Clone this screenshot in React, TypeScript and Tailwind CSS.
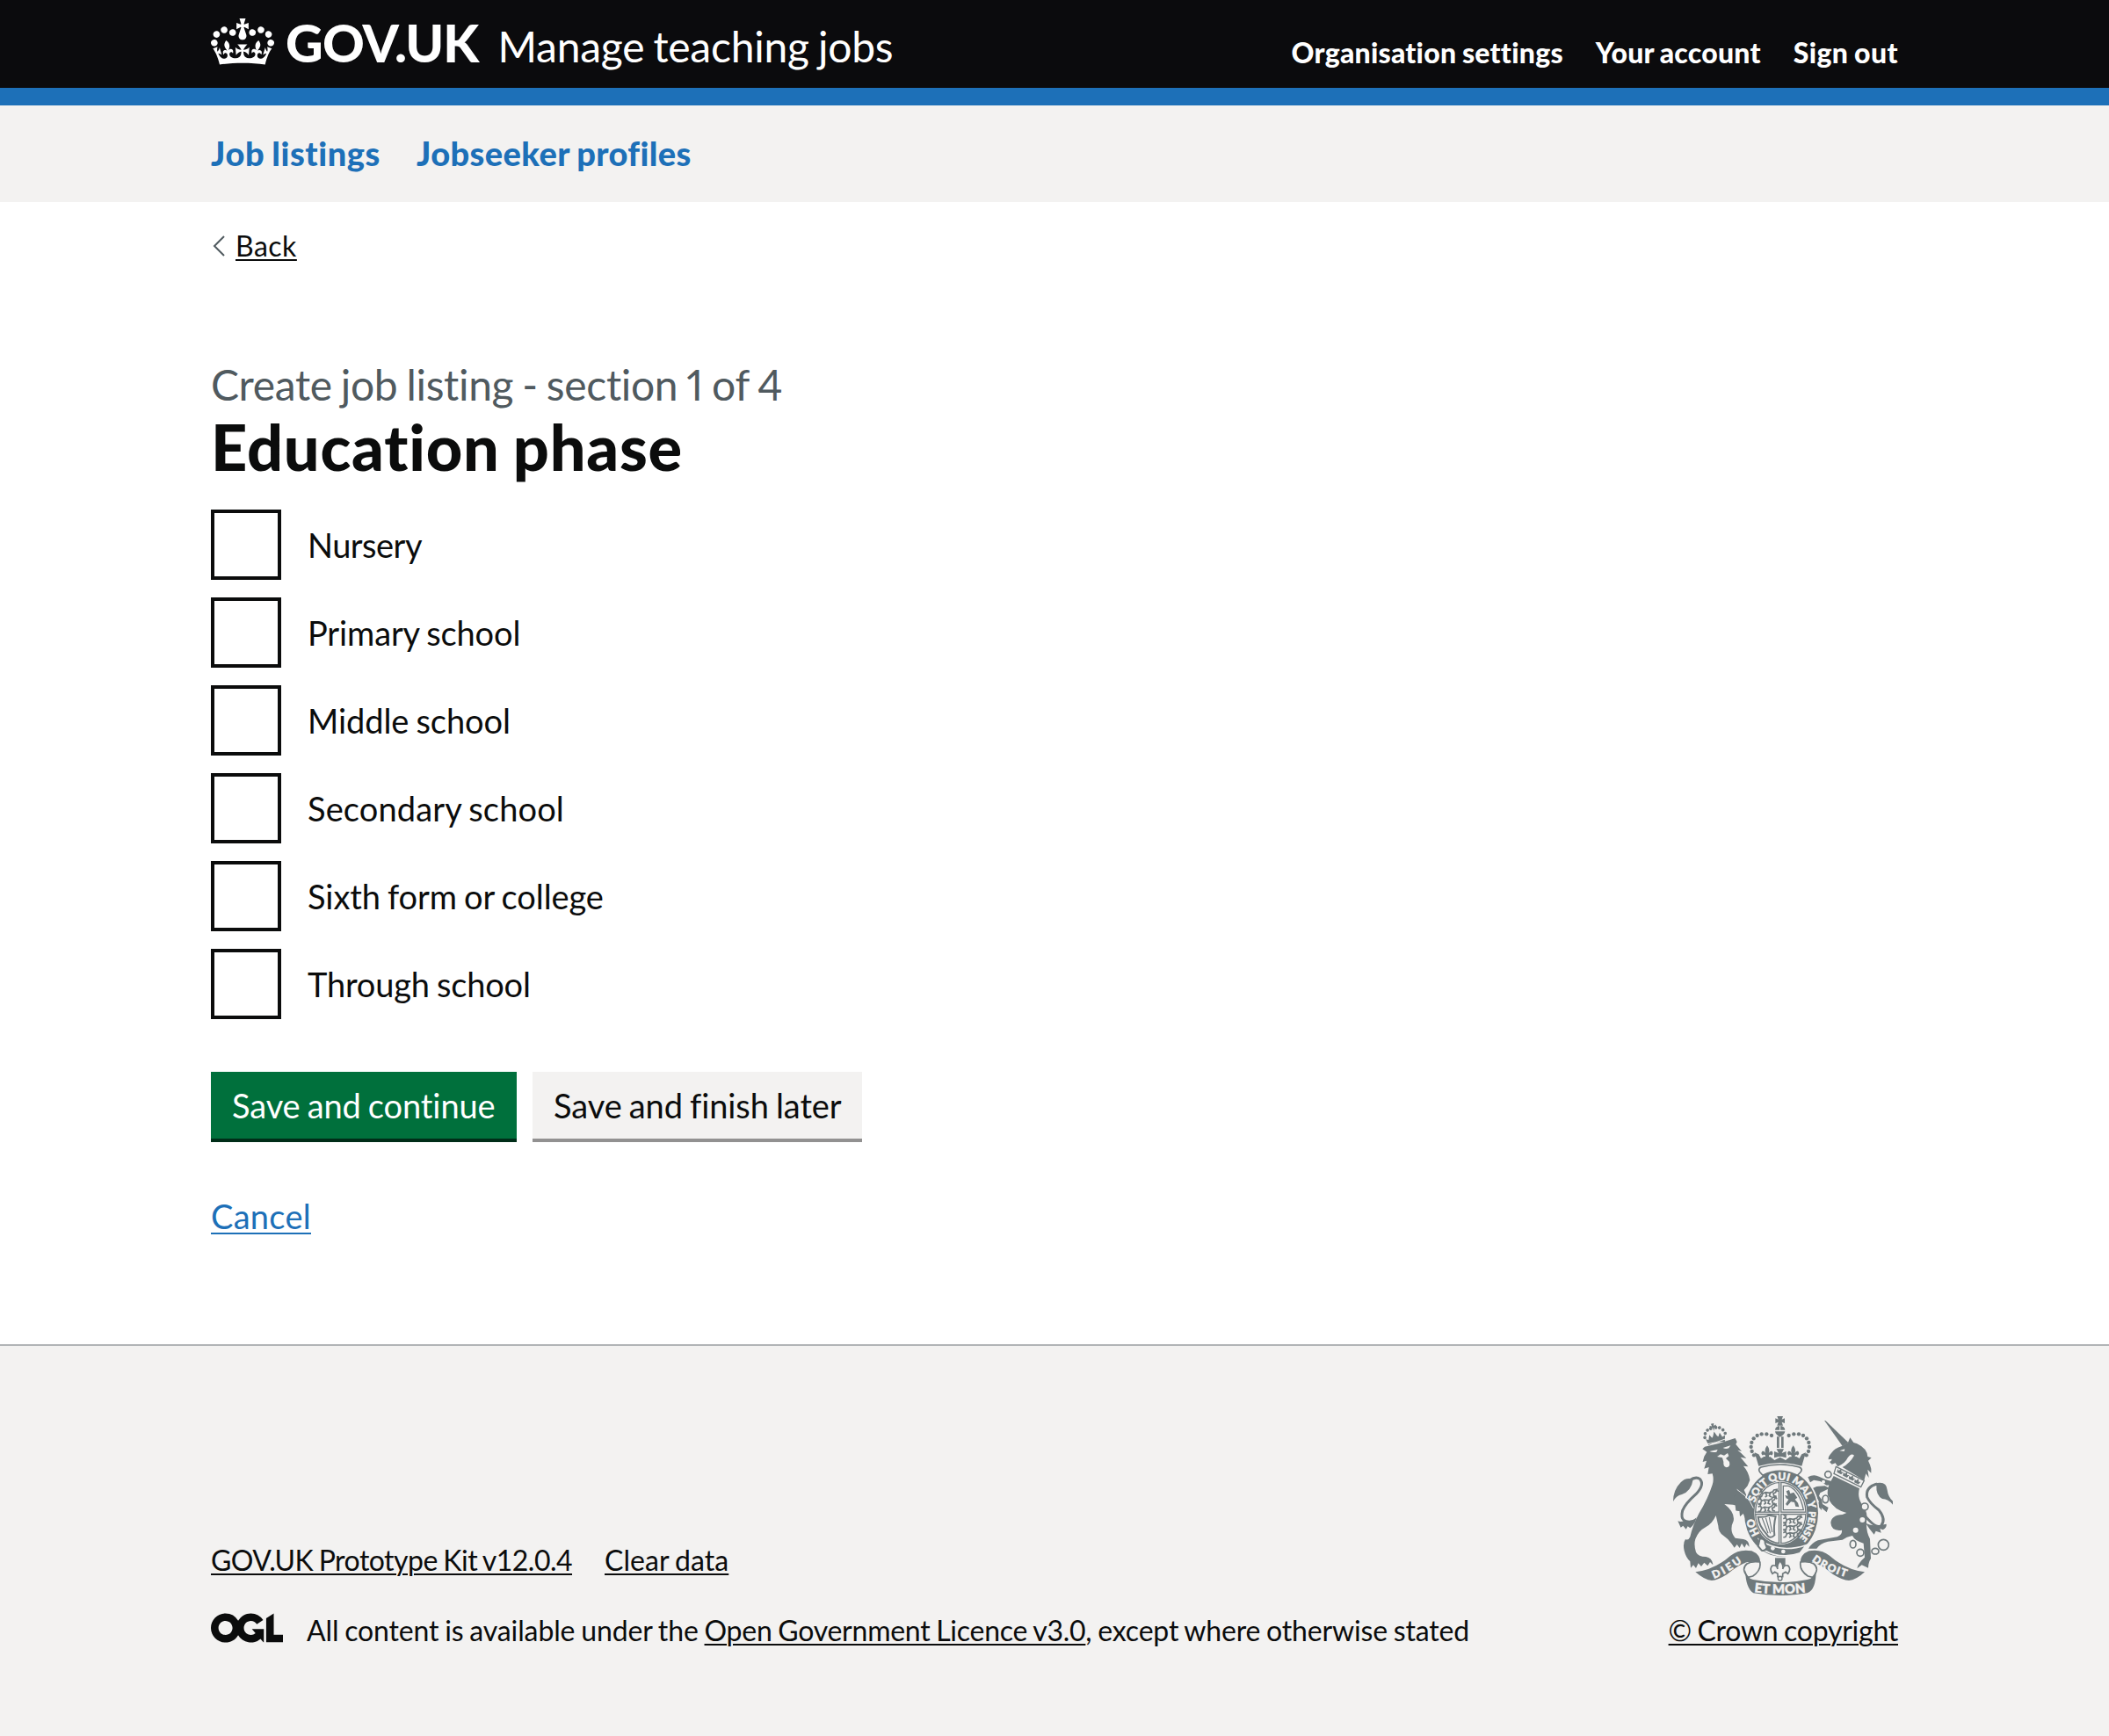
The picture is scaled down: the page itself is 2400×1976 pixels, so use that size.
const phases = [
  { label: "Nursery", text: "tracking-[-0.5px]" },
  { label: "Primary school", text: "tracking-[-0.13px]" },
  { label: "Middle school", text: "tracking-[-0.07px]" },
  { label: "Secondary school", text: "tracking-[0.13px]" },
  { label: "Sixth form or college", text: "tracking-[-0.09px]" },
  { label: "Through school", text: "tracking-[-0.17px]" },
];

function Crown() {
  return (
    <svg viewBox="0 0 132 97" className="h-[53px] w-[72px]" fill="currentColor" aria-hidden="true">
      <path
        fillRule="evenodd"
        d="M25 30.2c3.5 1.5 7.7-.2 9.1-3.7 1.5-3.6-.2-7.8-3.9-9.2-3.6-1.4-7.6.3-9.1 3.9-1.4 3.5.3 7.5 3.9 9zM9 39.5c3.6 1.5 7.8-.2 9.2-3.7 1.5-3.6-.2-7.8-3.9-9.1-3.6-1.5-7.6.2-9.1 3.8-1.4 3.5.3 7.5 3.8 9zM4.4 57.2c3.5 1.5 7.7-.2 9.1-3.8 1.5-3.6-.2-7.7-3.9-9.1-3.5-1.5-7.6.3-9.1 3.8-1.4 3.5.3 7.6 3.9 9.1zm38.3-21.4c3.5 1.5 7.7-.2 9.1-3.8 1.5-3.6-.2-7.7-3.9-9.1-3.6-1.5-7.6.3-9.1 3.8-1.3 3.6.4 7.7 3.9 9.1zm64.4-5.6c-3.6 1.5-7.8-.2-9.1-3.7-1.5-3.6.2-7.8 3.8-9.2 3.6-1.4 7.7.3 9.2 3.9 1.3 3.5-.4 7.5-3.9 9zm15.9 9.3c-3.6 1.5-7.7-.2-9.1-3.7-1.5-3.6.2-7.8 3.7-9.1 3.6-1.5 7.7.2 9.2 3.8 1.5 3.5-.3 7.5-3.8 9zm4.7 17.7c-3.6 1.5-7.8-.2-9.2-3.8-1.5-3.6.2-7.7 3.9-9.1 3.6-1.5 7.7.3 9.2 3.8 1.3 3.5-.4 7.6-3.9 9.1zM89.3 35.8c-3.6 1.5-7.8-.2-9.2-3.8-1.4-3.6.2-7.7 3.9-9.1 3.6-1.5 7.7.3 9.2 3.8 1.4 3.6-.3 7.7-3.9 9.1zM69.7 17.7l8.9 4.7V9.3l-8.9 2.8c-.2-.3-.5-.6-.9-.9L72.4 0H59.6l3.5 11.2c-.3.3-.6.5-.9.9l-8.8-2.8v13.1l8.8-4.7c.3.3.6.7.9.9l-5 15.4v.1c-.2.8-.4 1.6-.4 2.4 0 4.1 3.1 7.5 7 8.1h.2c.3 0 .7.1 1 .1.4 0 .7 0 1-.1h.2c4-.6 7.1-4.1 7.1-8.1 0-.8-.1-1.7-.4-2.4V34l-5.1-15.4c.4-.2.7-.6 1-.9zM66 92.8c16.9 0 32.8 1.1 47.1 3.2 4-16.9 8.9-26.7 14-33.5l-9.6-3.4c1 4.9 1.1 7.2 0 10.2-1.5-1.4-3-4.3-4.2-8.7L108.6 76c2.8-2 5-3.2 7.5-3.3-4.4 9.4-10 11.9-13.6 11.2-4.3-.8-6.3-4.6-5.6-7.9 1-4.7 5.7-5.9 8-.5 4.3-8.7-3-11.4-7.6-8.8 7.1-7.2 7.9-13.5 2.1-21.1-8 6.1-8.1 12.3-4.5 20.8-4.7-5.4-12.1-2.5-9.5 6.2 3.4-5.2 7.9-2 7.2 3.1-.6 4.3-6.4 7.8-13.5 7.2-10.3-.9-10.9-8-11.2-13.8 2.5-.5 7.1 1.8 11 7.3L80.2 60c-4.1 4.4-8 5.3-12.3 5.4 1.4-4.4 8-11.6 8-11.6H55.5s6.4 7.2 7.9 11.6c-4.2-.1-8-1-12.3-5.4l1.4 16.4c3.9-5.5 8.5-7.7 10.9-7.3-.3 5.8-.9 12.8-11.1 13.8-7.2.6-12.9-2.9-13.5-7.2-.7-5 3.8-8.3 7.1-3.1 2.7-8.7-4.6-11.6-9.4-6.2 3.7-8.5 3.6-14.7-4.6-20.8-5.8 7.6-5 13.9 2.2 21.1-4.7-2.6-11.9.1-7.7 8.8 2.3-5.5 7.1-4.2 8.1.5.7 3.3-1.3 7.1-5.7 7.9-3.5.7-9-1.8-13.5-11.2 2.5.1 4.7 1.3 7.5 3.3l-4.7-15.4c-1.2 4.4-2.7 7.2-4.3 8.7-1.1-3-.9-5.3 0-10.2l-9.5 3.4c5 6.9 9.9 16.7 14 33.5 14.8-2.1 30.8-3.2 47.7-3.2z"
      />
    </svg>
  );
}

function OglLogo() {
  return (
    <svg viewBox="0 0 483.2 195.7" className="h-[34px] w-[82px]" fill="currentColor" aria-hidden="true">
      <path d="M421.5 142.8V.1l-50.7 32.3v161.1h112.4v-50.7zm-122.3-9.6A47.12 47.12 0 0 1 221 97.8c0-26 21.1-47.1 47.1-47.1 16.7 0 31.4 8.7 39.7 21.8l42.7-27.2A97.63 97.63 0 0 0 268.1 0c-36.5 0-68.3 20.1-85.1 49.7A98 98 0 0 0 97.8 0C43.9 0 0 43.9 0 97.8s43.9 97.8 97.8 97.8c36.5 0 68.3-20.1 85.1-49.7a97.76 97.76 0 0 0 149.6 25.4l19.4 22.2h3v-87.8h-80l24.3 27.5zM97.8 145c-26 0-47.1-21.1-47.1-47.1s21.1-47.1 47.1-47.1 47.1 21.1 47.1 47.1S123.8 145 97.8 145" />
    </svg>
  );
}

const BG = "#f3f2f1";
const INK = "#6f797c";

const archDots = [
  [408, 132], [391, 127], [374, 127], [359, 132], [347, 142], [340, 156], [338, 171], [341, 186], [348, 199],
];

function Fleur({ x, y, s = 1 }: { x: number; y: number; s?: number }) {
  return (
    <path
      transform={`translate(${x} ${y}) scale(${s})`}
      d="M0-18Q9-6 4 4Q7-4 13-2Q19 4 12 10Q10 5 5 9L4 20H-4L-5 9Q-10 5-12 10Q-19 4-13-2Q-7-4-4 4Q-9-6 0-18Z"
    />
  );
}

function HeraldicLion({ x, y }: { x: number; y: number }) {
  return (
    <path
      transform={`translate(${x} ${y})`}
      fill="none"
      stroke={INK}
      strokeWidth="5"
      d="M2 4L10 0L14 8L24 4L36 6L48 2L52-4L62-6L58 4L50 8L52 16L60 18M14 8L10 18L2 20M24 6L28 16L22 20M40 6L36 16L44 20M10-2L6-7L14-6M62-6L66 2"
    />
  );
}

function RoyalArms() {
  return (
    <svg viewBox="72 66 750 612" className="h-[204px] w-[250px]" fill={INK} fontFamily="Lato, sans-serif" fontWeight="900" aria-hidden="true">
      <defs>
        <path id="garter" d="M441 510A94 113 0 0 1 441 284A94 113 0 0 1 441 510" />
        <path id="ribbon-left" d="M211 621Q262 602 330 548" />
        <path id="ribbon-mid" d="M349 667Q437 678 532 666" />
        <path id="ribbon-right" d="M545 559Q594 598 700 627" />
      </defs>

      {/* Lion supporter */}
      <g fill="none" stroke={INK} strokeWidth="9">
        <path d="M146 424Q92 436 104 388Q114 364 150 332Q180 300 164 281Q150 270 128 285" />
      </g>
      <path d="M72 357Q72 318 98 292Q116 273 140 282Q134 322 102 333Q82 338 72 357Z" />
      <path d="M88 424Q98 428 108 424Q128 432 152 412Q146 436 130 448L122 442L116 452L106 440L98 446Z" />
      <path d="M172 178L180 170Q230 160 284 141L290 154L286 162L306 186L292 182L304 192L322 210L302 206L318 226L328 238L312 236Q330 256 334 284L326 304L314 318L324 340Q342 362 345 385L343 408L328 400L320 418L311 398L300 408L299 390L286 388L293 372L276 368L247 366Q284 394 278 424Q262 456 284 482L312 486Q332 490 332 512L322 502L316 515L306 500L299 516L290 504L281 515L272 502Q262 486 244 474Q226 462 226 440L218 405Q206 432 184 444Q158 458 148 485Q142 505 150 530Q158 546 184 546Q206 550 208 574L198 564L190 577L178 566L168 579L158 568L150 585L141 574L132 584L130 562Q116 550 110 526Q104 500 114 486Q124 492 130 478Q138 440 160 398Q190 350 206 300Q212 282 206 262L190 264L194 240L178 245L186 218L173 222Q176 202 187 188Z" />
      <g fill={BG}>
        <path d="M196 186L224 180L220 188Q206 190 196 186ZM242 174L268 166L262 175Q252 180 242 174Z" />
        <path d="M222 204L234 196L246 200L258 192L262 202L252 210L264 222Q268 240 254 241Q242 238 244 222L240 208Z" />
      </g>
      <g transform="rotate(-12 214 130)">
        {[179, 183, 193, 205, 223, 235, 245, 250].map((x, i) => (
          <circle key={x} cx={x} cy={[132, 119, 109, 106, 106, 109, 119, 132][i]} r="5.5" />
        ))}
        <path d="M209 90H219L217 99L225 96V107L217 104L215 116L211 104L203 107V96L211 99Z" />
        <path d="M181 138L190 142L196 126L203 138L207 134L214 118L221 134L225 138L232 126L238 142L248 138L243 160Q214 152 186 160Z" />
      </g>
      <path d="M184 162Q220 157 250 144" fill="none" stroke={BG} strokeWidth="3" />

      {/* Unicorn supporter */}
      <path d="M588 80L593 82L670 156L650 168Z" />
      <path d="M648 168Q622 176 612 192Q601 204 602 214L614 212L612 218L606 222L614 230L626 226L634 238Q660 226 668 208Q680 190 690 200Q676 226 650 240L724 285L730 262L740 276L736 248L748 260Q750 246 744 232L738 218L749 208L736 204Q734 176 700 160L688 156L676 139L669 156Z" />
      <path d="M640 184L658 178L656 186Z" fill={BG} />
      <path d="M628 238L724 286L713 308L621 262Z" fill={BG} stroke={INK} strokeWidth="4" />
      {[[642, 254], [662, 265], [682, 276], [701, 288]].map(([x, y]) => (
        <g key={x} transform={`translate(${x} ${y}) rotate(27)`}>
          <path d="M0-9L5 0L11-3L8 8H-8L-11-3L-5 0Z" />
        </g>
      ))}
      <path d="M620 270L708 313Q700 342 716 366Q736 388 733 418Q728 455 744 485L747 552Q738 566 738 584L716 574L700 586Q704 566 726 548L722 500Q692 492 684 474Q664 478 650 488L600 494Q574 500 562 518L534 518Q544 500 566 490L632 478Q650 470 648 455Q612 460 610 430Q612 404 650 402L664 396Q622 386 604 352Q594 330 604 300Z" />
      <path d="M610 300L596 302L574 288L552 284L540 292L532 274Q552 262 570 272L592 282L612 288ZM606 312L574 328L570 338L580 352L582 366L602 378L596 394L578 378L580 388L562 370L570 358L556 332L544 340L540 316L562 306L590 304Z" />
      <path d="M768 297Q728 308 734 342Q744 364 774 386Q800 418 782 440Q764 452 722 400" fill="none" stroke={INK} strokeWidth="9" />
      <path d="M758 297Q800 284 803 318Q806 342 822 356V368Q806 348 786 348Q764 336 766 303Z" />
      <path d="M728 430Q750 446 800 434Q802 446 788 454L778 450L782 464L764 458L758 470Q742 452 728 430Z" />
      <g fill={BG}>
        <circle cx="718" cy="420" r="9" />
        <circle cx="695" cy="455" r="9" />
        <ellipse cx="592" cy="349" rx="13" ry="15" />
        <circle cx="585" cy="290" r="6" />
      </g>
      <g fill="none" stroke={INK} strokeWidth="5">
        <circle cx="601" cy="265" r="11" />
        <ellipse cx="592" cy="349" rx="10" ry="13" />
        <circle cx="726" cy="375" r="12" fill={BG} />
        <ellipse cx="686" cy="503" rx="10" ry="13" />
        <circle cx="711" cy="532" r="12" />
        <ellipse cx="762" cy="527" rx="12" ry="10" />
        <circle cx="790" cy="505" r="18" />
      </g>

      {/* Garter and shield */}
      <ellipse cx="441" cy="397" rx="131" ry="153" fill={BG} />
      <ellipse cx="441" cy="397" rx="126" ry="148" />
      <ellipse cx="439" cy="396" rx="90" ry="108" fill={BG} />
      <ellipse cx="439" cy="396" rx="86" ry="104" fill="none" stroke={INK} strokeWidth="4" />
      <g fill={BG} stroke={BG} strokeWidth="1.5" fontSize="36">
        <text><textPath href="#garter" startOffset="13.5%">HO</textPath></text>
        <text><textPath href="#garter" startOffset="30.5%">SOIT</textPath></text>
        <text><textPath href="#garter" startOffset="43.8%">QUI</textPath></text>
        <text><textPath href="#garter" startOffset="55.5%">MAL</textPath></text>
        <text><textPath href="#garter" startOffset="69%">Y</textPath></text>
        <text fontSize="32"><textPath href="#garter" startOffset="74%">PENSE</textPath></text>
      </g>
      <path d="M437 292V500M353 397H525" fill="none" stroke={INK} strokeWidth="11" />
      <path d="M437 292V500M353 397H525" fill="none" stroke={BG} strokeWidth="3" />
      <HeraldicLion x={364} y={322} />
      <HeraldicLion x={360} y={347} />
      <HeraldicLion x={360} y={372} />
      <HeraldicLion x={446} y={412} />
      <HeraldicLion x={446} y={436} />
      <HeraldicLion x={446} y={460} />
      <path d="M448 304H466Q504 320 517 386H448Z" fill="none" stroke={INK} strokeWidth="4" />
      <path d="M458 322L468 318L472 330L484 326L496 344L488 350L498 362L502 376L490 374L486 360L474 358L462 372L456 366L466 350L458 346L454 336L464 338Z" />
      <path d="M362 410Q390 412 398 404L422 408Q414 440 418 472Q402 488 392 470Q364 440 362 410Z" fill="none" stroke={INK} strokeWidth="6" />
      <path d="M376 414L396 466M388 413L404 466M400 411L410 462" fill="none" stroke={INK} strokeWidth="3.5" />
      <path d="M366 488Q436 536 526 506L505 533Q440 556 384 524Z" stroke={BG} strokeWidth="5" />
      <path d="M368 484Q388 484 386 500L392 514Q388 528 374 524L362 510Z" fill={BG} stroke={INK} strokeWidth="6" />
      <circle cx="412" cy="517" r="7" fill={BG} />
      <circle cx="448" cy="528" r="7" fill={BG} />
      <path d="M294 318L318 344Q342 366 345 385L343 408L328 400L320 420L311 398L300 408L299 390L286 388L280 340Z" />
      <path d="M290 316L318 338Q336 354 346 380" fill="none" stroke={BG} strokeWidth="3" />

      {/* Imperial crown */}
      <path d="M427 66H447L443 77L453 73V90L443 86L447 98H427L431 86L421 90V73L431 77Z" />
      <path d="M420 113A17 14 0 0 1 454 113ZM420 118H454Q452 130 437 137Q422 130 420 118Z" />
      <path d="M437 99V116" stroke={BG} strokeWidth="3" />
      {archDots.map(([x, y]) => (
        <g key={y + x}>
          <circle cx={x} cy={y} r="6.5" />
          <circle cx={875 - x} cy={y} r="6.5" />
        </g>
      ))}
      <path d="M426 136H434V174H426ZM441 136H449V174H441Z" />
      <path d="M425 178H450L443 192L458 186V208L442 204H432L417 208V186L432 192Z" />
      <Fleur x={393} y={188} s={1.25} />
      <Fleur x={482} y={188} s={1.25} />
      <path d="M350 190L364 196L372 210L382 204L404 205L418 216L437 206L456 216L470 205L493 204L503 210L511 196L525 190L511 236Q437 214 364 236Z" />
      <path d="M372 240Q437 222 503 240Q516 246 506 258L496 268Q437 238 378 268L369 258Q360 246 372 240Z" fill={BG} stroke={INK} strokeWidth="5" />

      {/* Motto ribbon */}
      <path d="M420 550H455V576H420Z" />
      <path d="M437 560Q450 574 446 588Q450 572 464 576Q476 586 464 604L456 598L446 604V614H429V604L419 598L411 604Q399 586 411 576Q425 572 429 588Q425 574 437 560Z" fill={BG} stroke={INK} strokeWidth="5" />
      <circle cx="437" cy="620" r="7" fill={BG} stroke={INK} strokeWidth="4" />
      <path d="M148 598Q214 590 268 542Q298 518 340 526Q370 538 370 566Q346 566 326 564Q300 570 256 606Q224 626 204 627Q180 626 148 598Z" />
      <path d="M726 598Q660 590 606 542Q576 518 536 526Q506 538 506 566Q530 566 548 564Q574 570 618 606Q650 626 672 627Q696 626 726 598Z" />
      <g fill={BG} stroke={INK} strokeWidth="5">
        <path d="M368 564Q340 560 324 570Q302 588 328 616L344 612Q374 592 368 564Z" />
        <path d="M507 564Q536 560 552 570Q574 588 548 616L532 612Q502 592 507 564Z" />
      </g>
      <path d="M318 592Q326 622 345 624Q437 642 530 624Q552 622 560 592Q560 660 530 670Q437 686 346 670Q320 654 318 592Z" />
      <g fill={BG} stroke={BG} strokeWidth="1.5" fontSize="36">
        <text><textPath href="#ribbon-left" textLength="112">DIEU</textPath></text>
        <text fontSize="44"><textPath href="#ribbon-mid" textLength="176">ET MON</textPath></text>
        <text><textPath href="#ribbon-right" textLength="130">DROIT</textPath></text>
      </g>
    </svg>
  );
}

export default function App() {
  return (
    <div className="flex h-[1976px] w-[2400px] flex-col bg-white font-[Lato,sans-serif] whitespace-nowrap text-[#0b0c0c] [font-variant-ligatures:none] **:[word-spacing:-0.04em]">
      <header className="h-[120px] border-b-[20px] border-[#1d70b8] bg-[#0b0b0d] px-[240px] text-white">
        <div className="flex items-start justify-between">
          <div className="flex items-start">
            <a className="flex items-start pt-[13px]">
              <span className="pt-2"><Crown /></span>
              <span className="ml-[13px] text-[59px] leading-[72px] font-black tracking-[-0.85px]">GOV.UK</span>
            </a>
            <a className="ml-[22px] pt-[23px] text-[48px] leading-[60px] tracking-[-0.24px]">Manage teaching jobs</a>
          </div>
          <nav className="flex gap-[37px] pt-10 text-[32px] leading-10 font-black">
            <a className="tracking-[0.25px]">Organisation settings</a>
            <a className="tracking-[0.23px]">Your account</a>
            <a className="tracking-[0.4px]">Sign out</a>
          </nav>
        </div>
      </header>

      <nav className="flex h-[110px] gap-[41px] bg-[#f3f2f1] px-[240px] pt-[29px] text-[38px] leading-[50px] font-black text-[#1d70b8]">
        <a className="tracking-[0.57px]">Job listings</a>
        <a className="tracking-[0.4px]">Jobseeker profiles</a>
      </nav>

      <main className="flex h-[1300px] flex-col items-start px-[240px]">
        <a className="mt-[30px] flex h-10 items-center text-[32px] leading-10">
          <svg viewBox="0 0 14 24" className="mr-3 ml-[2px] h-6 w-[14px]" fill="none" stroke="#505a5f" strokeWidth="2" aria-hidden="true">
            <path d="M13 1L2 12L13 23" />
          </svg>
          <span className="tracking-[0.5px] underline decoration-2 underline-offset-[3px]">Back</span>
        </a>

        <span className="mt-[108px] text-[48px] leading-[60px] tracking-[-0.33px] text-[#505a5f] [font-variant-numeric:proportional-nums]">Create job listing - section 1 of 4</span>
        <h1 className="text-[72px] leading-[80px] font-black tracking-[0.8px]">Education phase</h1>

        <div className="mt-8 flex flex-col gap-5">
          {phases.map((p) => (
            <label key={p.label} className="flex h-20 items-center">
              <span className="h-20 w-20 border-4 border-[#0b0c0c] bg-white" />
              <span className={`pl-[30px] text-[38px] leading-[50px] ${p.text}`}>{p.label}</span>
            </label>
          ))}
        </div>

        <div className="mt-[60px] flex gap-[18px] text-[38px] leading-[50px]">
          <button className="h-20 w-[348px] border-b-4 border-[#002d18] bg-[#00703c] px-6 text-left tracking-[-0.1px] text-white">Save and continue</button>
          <button className="h-20 w-[375px] border-b-4 border-[#929191] bg-[#f3f2f1] px-6 text-left tracking-[-0.09px]">Save and finish later</button>
        </div>

        <a className="mt-[59px] text-[38px] leading-[50px] tracking-[0.28px] text-[#1d70b8] underline decoration-2 underline-offset-4">Cancel</a>
      </main>

      <footer className="flex flex-1 items-start justify-between border-t-2 border-[#b1b4b6] bg-[#f3f2f1] px-[240px] text-[32px] leading-10">
        <div className="mt-56">
          <div className="flex gap-[37px]">
            <a className="tracking-[-0.51px] underline decoration-2 underline-offset-[3px]">GOV.UK Prototype Kit v12.0.4</a>
            <a className="tracking-[0.06px] underline decoration-2 underline-offset-[3px]">Clear data</a>
          </div>
          <div className="mt-10 flex">
            <span className="mr-[27px]"><OglLogo /></span>
            <p>
              <span className="tracking-[-0.12px]">All content is available under the </span>
              <a className="tracking-[-0.24px] underline decoration-2 underline-offset-[3px]">Open Government Licence v3.0</a>
              <span className="tracking-[-0.16px]">, except where otherwise stated</span>
            </p>
          </div>
        </div>
        <div className="mt-20 flex flex-col items-end gap-5">
          <span className="mr-[6px]"><RoyalArms /></span>
          <a className="tracking-[-0.26px] underline decoration-2 underline-offset-[3px]">© Crown copyright</a>
        </div>
      </footer>
    </div>
  );
}
